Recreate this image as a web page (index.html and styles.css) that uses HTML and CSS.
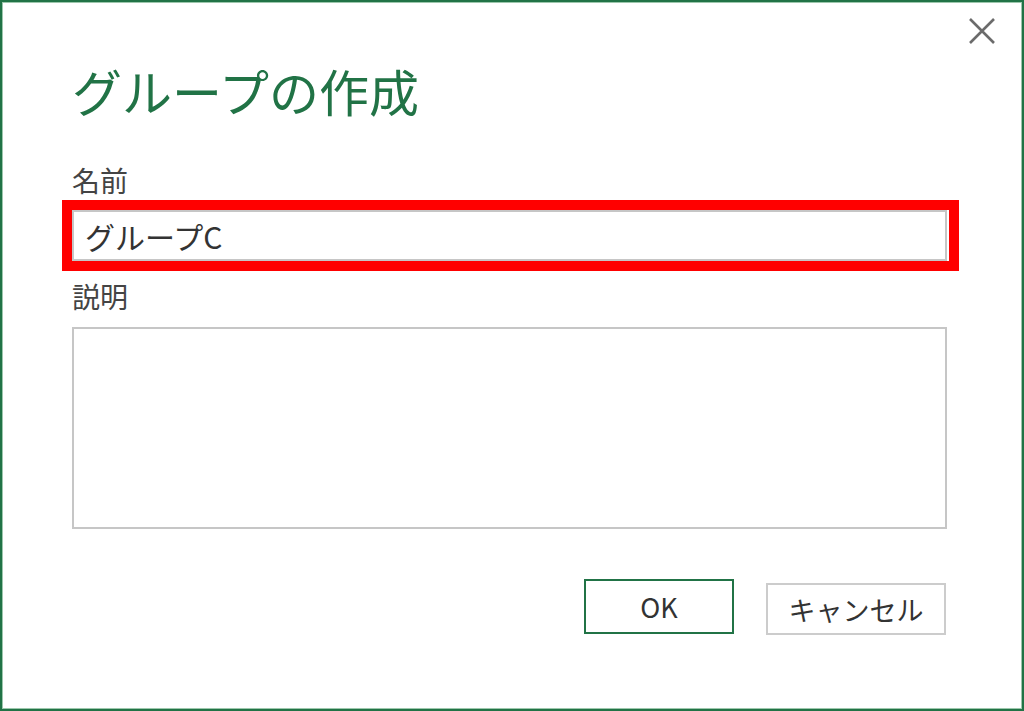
FILE: index.html
```html
<!DOCTYPE html>
<html lang="ja">
<head>
    <meta charset="UTF-8">
    <meta name="viewport" content="width=device-width, initial-scale=1.0">
    <title>グループの作成</title>
    <link rel="stylesheet" href="styles.css">
</head>
<body>
    <div class="dialog">
        <div class="topbar">
            <button class="close" aria-label="閉じる">
                <svg width="28" height="28" viewBox="0 0 28 28">
                    <path d="M2 2 L26 26 M26 2 L2 26" stroke="#6b6b6b" stroke-width="2.6" fill="none"/>
                </svg>
            </button>
        </div>

        <div class="content">
            <h1>グループの作成</h1>

            <label for="groupName">名前</label>
            <div class="highlight">
                <input type="text" id="groupName" value="グループC">
            </div>

            <label for="groupDesc" class="desc-label">説明</label>
            <textarea id="groupDesc"></textarea>

            <div class="actions">
                <button class="btn btn-ok">OK</button>
                <button class="btn btn-cancel">キャンセル</button>
            </div>
        </div>
    </div>
</body>
</html>
```

FILE: styles.css
```css
body {
    margin: 0;
    font-family: "Noto Sans CJK JP", "Noto Sans", sans-serif;
    background: #ffffff;
}
.dialog {
    width: 1024px;
    height: 711px;
    box-sizing: border-box;
    border: 2px solid #217346;
    box-shadow: inset 0 0 0 1px #9cc7ac;
    background: #ffffff;
}
.topbar {
    display: flex;
    justify-content: flex-end;
    padding: 15px 26px 0 0;
}
.close {
    width: 28px;
    height: 28px;
    padding: 0;
    border: none;
    background: none;
    display: block;
}
.close svg {
    display: block;
}
.content {
    display: flex;
    flex-direction: column;
    padding: 0 75px 0 70px;
}
h1 {
    margin: 20px 0 0 0;
    font-size: 50px;
    line-height: 50px;
    font-weight: normal;
    color: #217346;
}
label {
    margin-top: 51px;
    font-size: 28px;
    line-height: 28px;
    color: #444444;
}
.desc-label {
    margin-top: 11px;
}
.highlight {
    margin: 6px -12px 0 -10px;
    border: 10px solid #ff0000;
    padding-right: 2px;
}
input {
    display: block;
    width: 100%;
    height: 51px;
    box-sizing: border-box;
    border: 2px solid #c6c6c6;
    padding: 0 0 0 11px;
    font-family: inherit;
    font-size: 30px;
    color: #333333;
    outline: none;
}
textarea {
    display: block;
    margin-top: 17px;
    height: 202px;
    box-sizing: border-box;
    border: 2px solid #c6c6c6;
    resize: none;
    font-family: inherit;
    outline: none;
}
.actions {
    display: flex;
    justify-content: flex-end;
    align-items: flex-end;
    gap: 32px;
    margin-top: 50px;
}
.btn {
    font-family: inherit;
    font-size: 27px;
    color: #333333;
    background: #ffffff;
    box-sizing: border-box;
    padding: 0;
}
.btn-ok {
    width: 150px;
    height: 55px;
    border: 2px solid #217346;
    margin-bottom: 1px;
}
.btn-cancel {
    width: 180px;
    height: 52px;
    border: 2px solid #cccccc;
    margin-right: 1px;
}
```
